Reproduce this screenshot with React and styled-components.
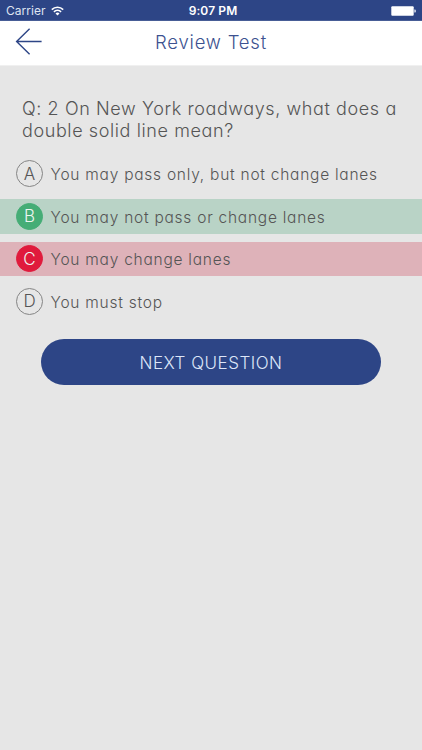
import React from "react";
import styled, { createGlobalStyle } from "styled-components";

const GlobalStyle = createGlobalStyle`
  * { box-sizing: border-box; }
  body { margin: 0; background: #e6e6e6; }
`;

const Screen = styled.div`
  width: 422px;
  height: 750px;
  overflow: hidden;
  background: #e6e6e6;
  color: #555;
  font-family: Inter, "Open Sans", sans-serif;
  font-weight: 300;
  font-feature-settings: "cv11" 1;
`;

const StatusBar = styled.div`
  height: 21px;
  display: grid;
  grid-template-columns: 1fr auto 1fr;
  align-items: center;
  padding: 1px 6px 0;
  background: #2d4586;
  border-bottom: 1px solid #485d96;
  color: #fff;
  font-family: Inter, sans-serif;
  font-feature-settings: normal;
  font-size: 12px;
  line-height: 19px;
`;

const Carrier = styled.div`
  display: flex;
  align-items: center;
  gap: 5px;
  font-weight: 400;
  letter-spacing: 0.05px;
  color: #dfe4f1;
`;

const Clock = styled.div`
  padding-left: 4px;
  font-weight: 600;
  letter-spacing: 0.1px;
`;

const Battery = styled.svg`
  justify-self: end;
`;

const NavBar = styled.header`
  height: 45px;
  display: grid;
  grid-template-columns: 44px 1fr 44px;
  align-items: center;
  background: #fff;
  border-bottom: 1px solid #f0f0f0;
`;

const BackButton = styled.button`
  height: 40px;
  padding: 0 0 3px 15px;
  border: 0;
  background: none;
  display: flex;
  align-items: center;
`;

const Title = styled.h1`
  margin: 0;
  padding-bottom: 2px;
  text-align: center;
  color: #3d5290;
  font-size: 18.5px;
  font-weight: 300;
  line-height: 24px;
  letter-spacing: 0.8px;
`;

const Question = styled.p`
  margin: 0;
  padding: 32px 0 0 22px;
  font-size: 18px;
  line-height: 22px;
  letter-spacing: 0.6px;
  white-space: nowrap;
`;

const Answers = styled.ul`
  list-style: none;
  margin: 0;
  padding: 14.4px 0 0;
  display: flex;
  flex-direction: column;
  gap: 8px;
`;

const rowColors = { plain: "transparent", correct: "#b9d3c6", wrong: "#deb2b9" };
const badgeColors = { plain: "transparent", correct: "#45ad76", wrong: "#e01a3c" };

const AnswerRow = styled.li`
  height: 34.6px;
  display: flex;
  align-items: center;
  gap: 7.5px;
  padding-left: 16px;
  background: ${(p) => rowColors[p.$state]};
`;

const Badge = styled.span`
  width: 27px;
  height: 27px;
  flex: none;
  display: flex;
  align-items: center;
  justify-content: center;
  border-radius: 50%;
  border: 1px solid ${(p) => (p.$state === "plain" ? "#858585" : badgeColors[p.$state])};
  background: ${(p) => badgeColors[p.$state]};
  color: ${(p) => (p.$state === "plain" ? "#555" : "#eef5f1")};
  font-size: 17px;
  line-height: 24px;
`;

const AnswerText = styled.span`
  padding-top: 3px;
  font-size: 15.5px;
  line-height: 22px;
  letter-spacing: 0.75px;
  white-space: nowrap;
`;

const NextButton = styled.button`
  display: block;
  width: 340px;
  height: 46px;
  margin: 20.6px 0 0 41px;
  padding: 2px 0 0;
  border: 0;
  border-radius: 23px;
  background: #2d4586;
  color: #dde5f8;
  font: inherit;
  font-feature-settings: "cv11" 1;
  font-size: 17px;
  line-height: 44px;
  letter-spacing: 0.5px;
`;

const answers = [
  { letter: "A", text: "You may pass only, but not change lanes", state: "plain" },
  { letter: "B", text: "You may not pass or change lanes", state: "correct" },
  { letter: "C", text: "You may change lanes", state: "wrong" },
  { letter: "D", text: "You must stop", state: "plain" },
];

function WifiIcon() {
  return (
    <svg width="13" height="10" viewBox="0 0 13 10" fill="none" stroke="#fff" strokeWidth="1.6">
      <path d="M0.8 3.6a8.2 8.2 0 0 1 11.4 0" />
      <path d="M2.9 5.8a5.2 5.2 0 0 1 7.2 0" />
      <path d="M6.5 9.4 4.5 7.4a2.9 2.9 0 0 1 4 0z" fill="#fff" stroke="none" />
    </svg>
  );
}

export default function App() {
  return (
    <Screen>
      <GlobalStyle />
      <StatusBar>
        <Carrier>
          Carrier
          <WifiIcon />
        </Carrier>
        <Clock>9:07 PM</Clock>
        <Battery width="25" height="10" viewBox="0 0 25 10">
          <rect x="0.3" y="0.2" width="22.4" height="9.5" rx="1" fill="#fff" />
          <path d="M23.3 3.4h0.8q0.8 0 0.8 1.6t-0.8 1.6h-0.8z" fill="#dfe4f1" />
        </Battery>
      </StatusBar>
      <NavBar>
        <BackButton aria-label="Back">
          <svg width="28" height="27" viewBox="0 0 28 27" fill="none" stroke="#2d4586" strokeWidth="1.4">
            <path d="M14.6 0.8 1.6 13.5 14.6 26.2M1.6 13.5H26.6" />
          </svg>
        </BackButton>
        <Title>Review Test</Title>
      </NavBar>
      <Question>
        Q: 2 On New York roadways, what does a
        <br />
        double solid line mean?
      </Question>
      <Answers>
        {answers.map((a) => (
          <AnswerRow key={a.letter} $state={a.state}>
            <Badge $state={a.state}>{a.letter}</Badge>
            <AnswerText>{a.text}</AnswerText>
          </AnswerRow>
        ))}
      </Answers>
      <NextButton>NEXT QUESTION</NextButton>
    </Screen>
  );
}
